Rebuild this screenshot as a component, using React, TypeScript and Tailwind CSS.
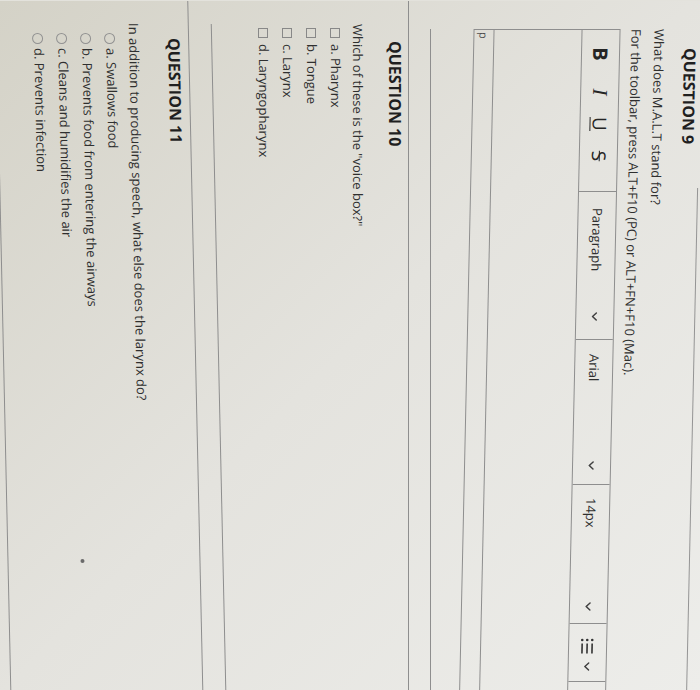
import React from "react";

// the reference is a phone photo of the quiz page, turned a quarter turn clockwise

const q10Options = ["a. Pharynx", "b. Tongue", "c. Larynx", "d. Laryngopharynx"];
const q11Options = [
  "a. Swallows food",
  "b. Prevents food from entering the airways",
  "c. Cleans and humidifies the air",
  "d. Prevents infection",
];

function Chevron() {
  return (
    <svg width="9" height="6" viewBox="0 0 9 6" className="shrink-0">
      <polyline
        points="1,1 4.5,4.8 8,1"
        fill="none"
        stroke="#404040"
        strokeWidth="1.5"
        strokeLinecap="round"
        strokeLinejoin="round"
      />
    </svg>
  );
}

function ListIcon() {
  return (
    <svg width="16" height="14" viewBox="0 0 16 14" className="shrink-0">
      {[2, 7, 12].map((y) => (
        <g key={y}>
          <circle cx="2" cy={y} r="1.3" fill="#333" />
          <rect x="5.5" y={y - 0.8} width="10" height="1.6" fill="#333" />
        </g>
      ))}
    </svg>
  );
}

export default function App() {
  return (
    <div className="w-[700px] h-[690px] overflow-hidden bg-[#e3e2dc]">
      <div className="w-[690px] h-[700px] origin-top-left rotate-90 translate-x-[700px] bg-[linear-gradient(225deg,#ededea_0%,#e4e3de_50%,#d4d2c7_100%)] text-[#2f2f2f] font-['Open_Sans',sans-serif]">
        {/* Question 9 */}
        <div className="h-[229px] skew-y-[1.25deg] origin-[100px_0px]">
          <div className="ml-[187px] mt-px h-px bg-[#949494]" />
          <div className="pl-[47px] text-[16px] leading-[20px] font-bold text-[#1f1f1f]">QUESTION 9</div>
          <p className="mt-[10px] pl-[28px] text-[13px] leading-[22px]">What does M.A.L.T stand for?</p>
          <p className="mt-px pl-[28px] text-[13px] leading-[22px]">
            For the toolbar, press ALT+F10 (PC) or ALT+FN+F10 (Mac).
          </p>

          <div className="mt-[5px] ml-[28px] w-[680px] border border-[#8e8e8e]">
            <div className="flex h-[38px] border-b border-[#8e8e8e] text-[13px] text-[#2f2f2f]">
              <div className="flex w-[162px] items-center border-r border-[#8e8e8e] text-[#252525]">
                <span className="ml-[12px] w-[24px] text-center text-[20px] font-bold leading-none">B</span>
                <span className="ml-[14px] w-[24px] text-center font-['Liberation_Serif',serif] text-[21px] italic leading-none">
                  I
                </span>
                <span className="ml-[8px] w-[24px] text-center text-[19px] leading-none underline underline-offset-2">
                  U
                </span>
                <span className="ml-[8px] w-[24px] text-center text-[19px] leading-none line-through">S</span>
              </div>
              <div className="flex w-[148px] items-center justify-between border-r border-[#8e8e8e] pl-[16px] pr-[18px]">
                <span>Paragraph</span>
                <Chevron />
              </div>
              <div className="flex w-[145px] items-center justify-between border-r border-[#8e8e8e] pl-[14px] pr-[14px]">
                <span>Arial</span>
                <Chevron />
              </div>
              <div className="flex w-[139px] items-center justify-between border-r border-[#8e8e8e] pl-[13px] pr-[12px]">
                <span>14px</span>
                <Chevron />
              </div>
              <div className="flex w-[58px] items-center justify-between border-r border-[#8e8e8e] pl-[14px] pr-[10px]">
                <ListIcon />
                <Chevron />
              </div>
            </div>
            <div className="h-[87px]" />
            <div className="h-[20px] border-t border-[#8e8e8e] pl-[2px] text-[11px] leading-[19px] text-[#505050]">p</div>
          </div>
        </div>

        {/* Question 10 */}
        <div>
          <div className="mt-[40px] ml-[28px] h-px bg-[#8e8e8e]" />
          <div className="mt-[21px] h-px bg-[#8e8e8e]" />
          <div className="mt-[3px] pl-[40px] text-[16px] leading-[20px] font-bold text-[#1f1f1f]">QUESTION 10</div>
          <p className="mt-[18px] pl-[23px] text-[13px] leading-[18px]">Which of these is the "voice box?"</p>
          <div className="mt-[2px]">
            {q10Options.map((opt) => (
              <div key={opt} className="flex h-[24px] items-center pl-[27px] text-[13px]">
                <span className="h-[10px] w-[10px] shrink-0 border border-[#888]" />
                <span className="ml-[6px]">{opt}</span>
              </div>
            ))}
          </div>
        </div>

        {/* Question 11 */}
        <div className="relative -skew-y-[1.25deg] origin-[80px_0px]">
          <div className="mt-[38px] ml-[23px] h-px bg-[#8e8e8e]" />
          <div className="mt-[22px] h-px bg-[#8e8e8e]" />
          <div className="mt-[4px] pl-[37px] text-[16px] leading-[20px] font-bold text-[#1f1f1f]">QUESTION 11</div>
          <p className="mt-[21px] pl-[22px] text-[13px] leading-[18px]">
            In addition to producing speech, what else does the larynx do?
          </p>
          <div className="mt-[3px]">
            {q11Options.map((opt) => (
              <div key={opt} className="flex h-[24px] items-center pl-[32px] text-[13px]">
                <span className="h-[11px] w-[11px] shrink-0 rounded-full border border-[#929292]" />
                <span className="ml-[4px]">{opt}</span>
              </div>
            ))}
          </div>
          <div className="mt-[29px] ml-[23px] h-px bg-[#8e8e8e]" />
          {/* dust speck on the screen */}
          <div className="absolute left-[558px] top-[139px] h-[4px] w-[4px] rounded-full bg-[#6a6a6a]" />
        </div>
      </div>
    </div>
  );
}
